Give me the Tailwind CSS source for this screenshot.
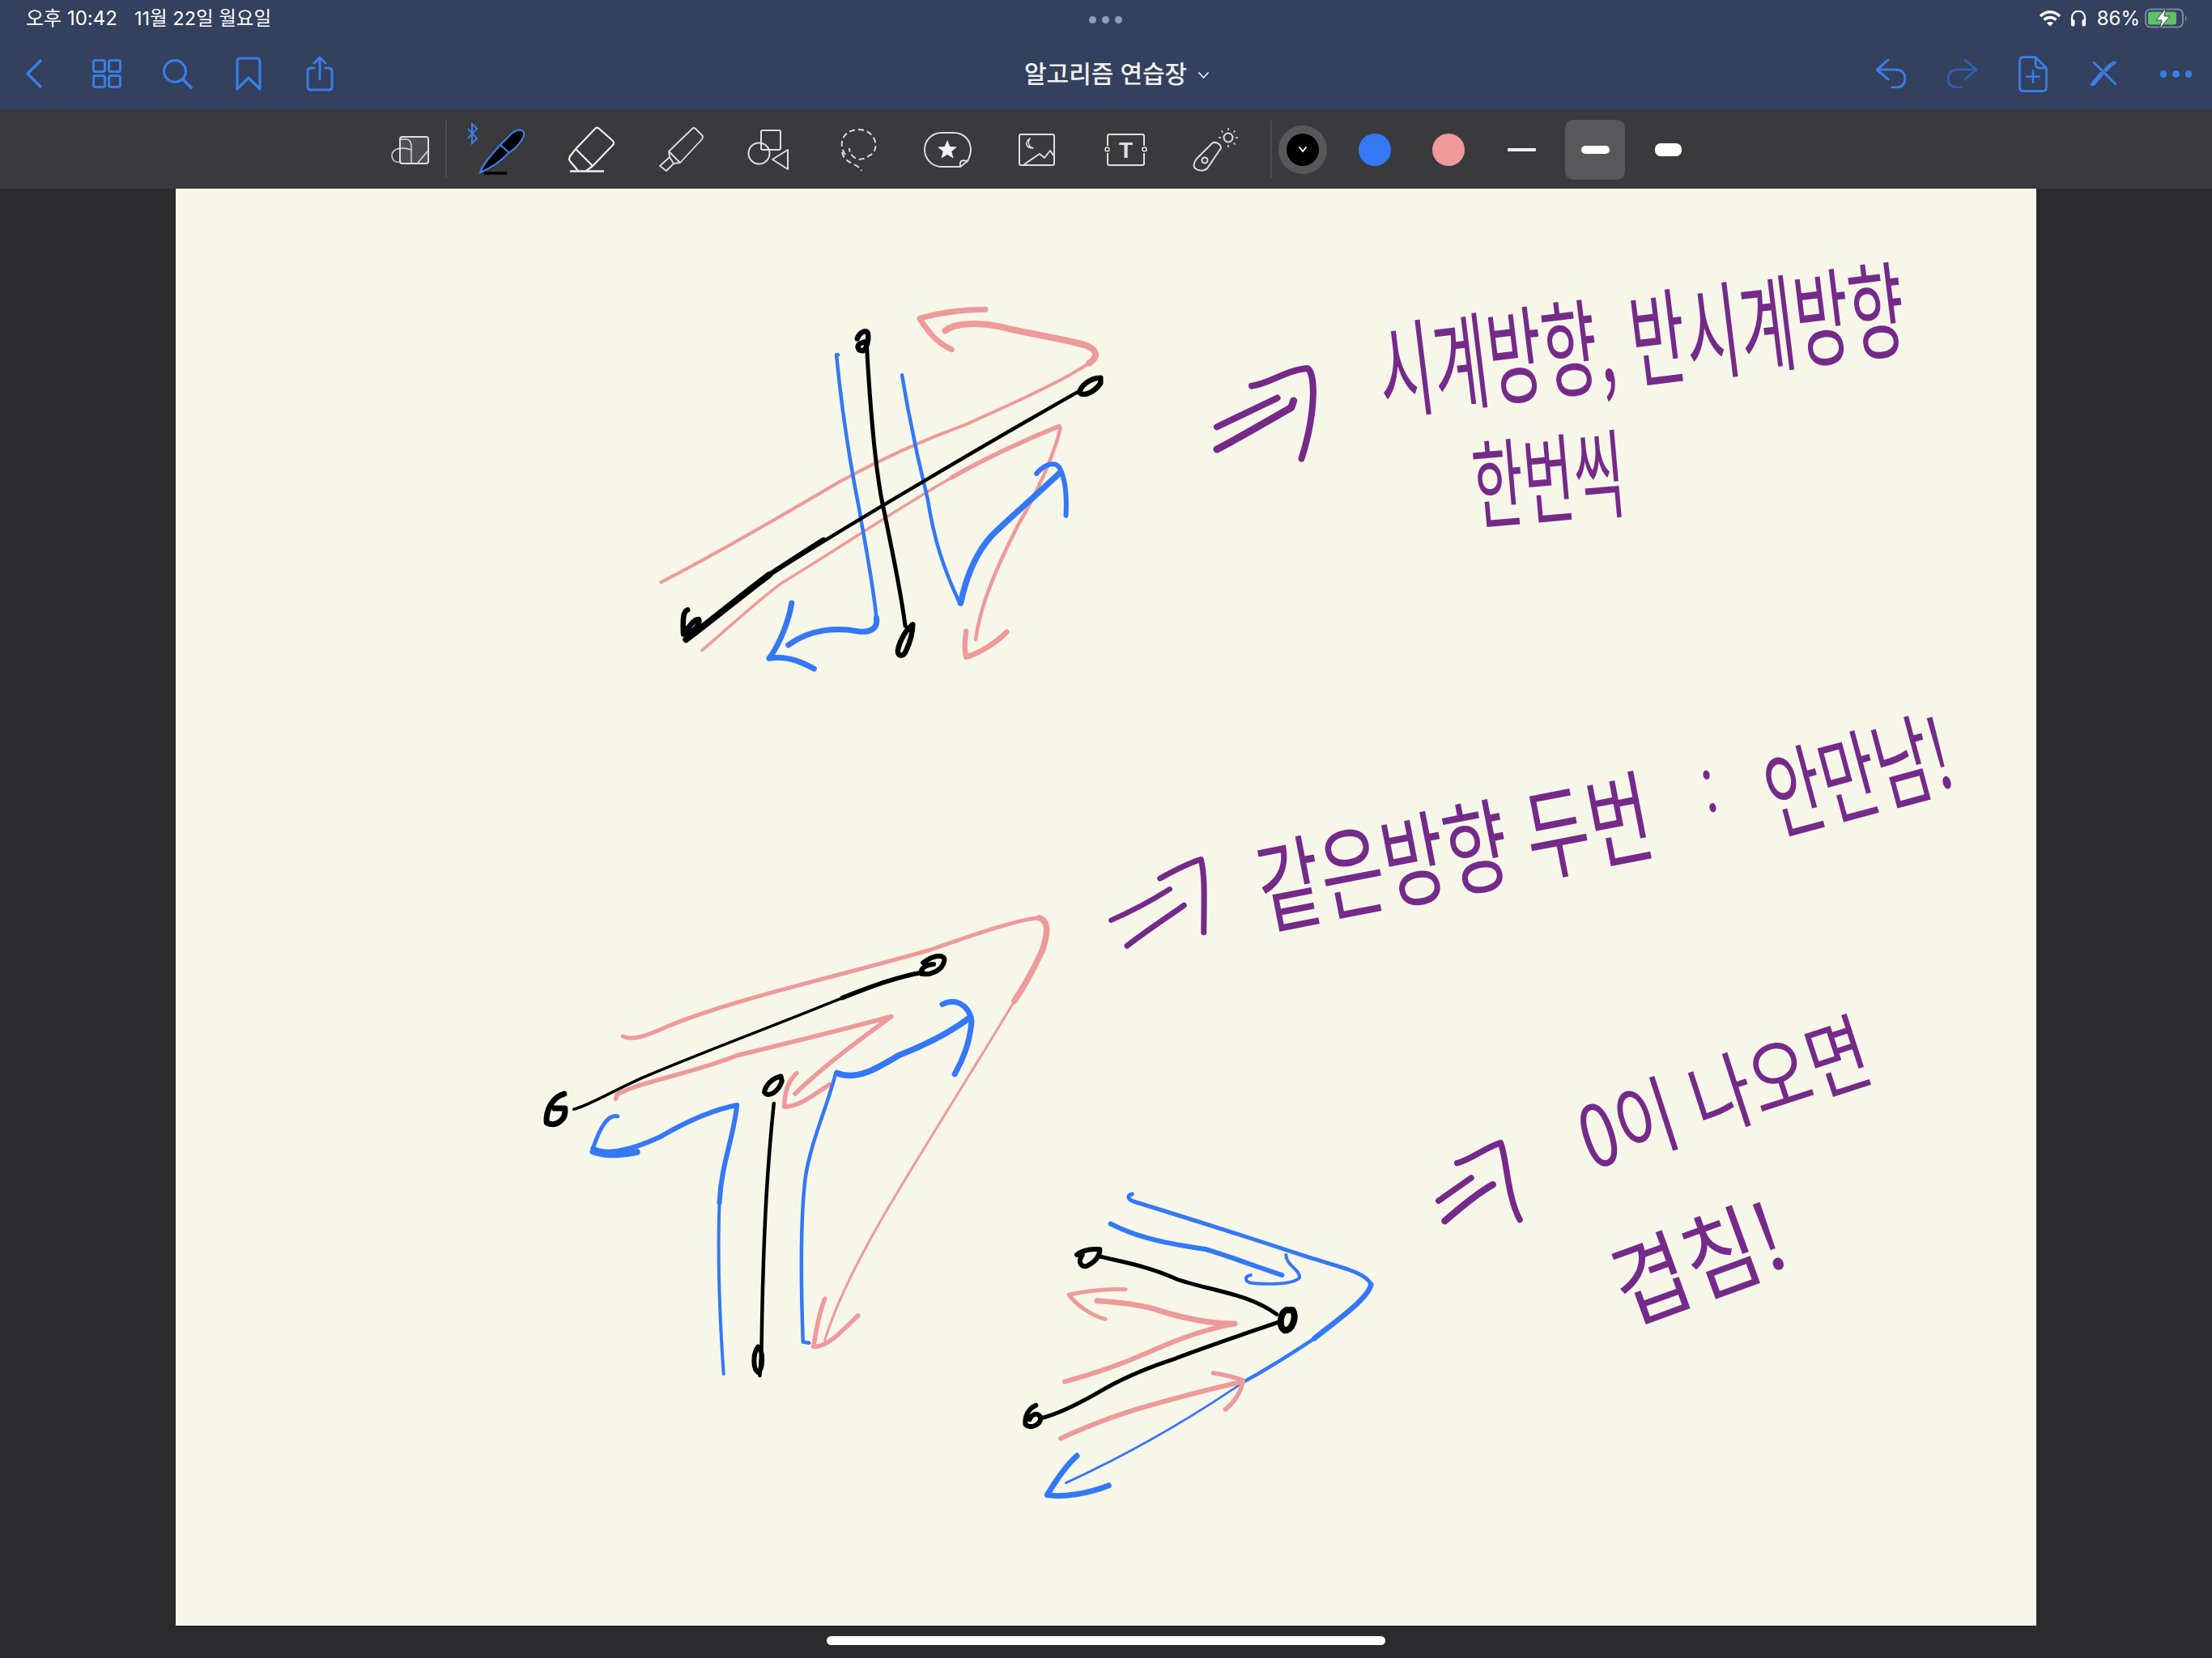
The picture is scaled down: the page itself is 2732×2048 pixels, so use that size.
<!DOCTYPE html>
<html lang="ko">
<head>
<meta charset="UTF-8">
<title>알고리즘 연습장</title>
<script src="https://cdn.jsdelivr.net/npm/@tailwindcss/browser@4"></script>
</head>
<body class="w-[2732px] h-[2048px] overflow-hidden bg-[#2b2b2d] [font-family:Inter,'Noto_Sans_CJK_KR',sans-serif]">

  <!-- top bars -->
  <header class="h-[136px] bg-[#33405e] flex flex-col">
    <div class="h-[46px] relative flex items-center pl-[32px] pr-[29px] text-white text-[24px] leading-none">
      <span class="w-[134px]">오후 10:42</span>
      <span class="text-[23.500px]">11월 22일 월요일</span>
      <div class="absolute left-[1345px] top-[20px] flex gap-[7px]">
        <i class="block w-[9px] h-[9px] rounded-full bg-[#8f9dbb]"></i>
        <i class="block w-[9px] h-[9px] rounded-full bg-[#8f9dbb]"></i>
        <i class="block w-[9px] h-[9px] rounded-full bg-[#8f9dbb]"></i>
      </div>
      <div class="ml-auto flex items-center">
        <svg class="w-[28px] h-[20px]" viewBox="0 0 28 20" fill="none" stroke="#fff" stroke-width="3.4">
          <path d="M2 7 C9 0 19 0 26 7"/><path d="M6.5 11.5 C11 7.5 17 7.5 21.5 11.5"/>
          <path d="M14 19.5 L10 15.5 C12 13.5 16 13.5 18 15.5 Z" fill="#fff" stroke="none"/>
        </svg>
        <svg class="w-[20px] h-[20px] ml-[11px]" viewBox="0 0 20 20" fill="none" stroke="#fff" stroke-width="2.2">
          <path d="M2 13 V9 C2 -2 18 -2 18 9 V13"/>
          <rect x="1" y="11" width="4.5" height="8.5" rx="2" fill="#fff" stroke="none"/>
          <rect x="14.5" y="11" width="4.5" height="8.5" rx="2" fill="#fff" stroke="none"/>
        </svg>
        <span class="ml-[13px]">86%</span>
        <svg class="w-[54px] h-[26px] ml-[6px]" viewBox="0 0 54 26" fill="none">
          <rect x="1" y="1.5" width="46" height="22" rx="6" stroke="#7d88a2" stroke-width="2"/>
          <rect x="4" y="4.5" width="35" height="16" rx="3" fill="#5dc264"/>
          <path d="M50 8 Q53 12.500 50 17 Z" fill="#7d88a2"/>
          <path d="M26 0 L14 15 H21 L18 26 L31 10 H24 Z" fill="#fff" stroke="#33405e" stroke-width="1"/>
        </svg>
      </div>
    </div>
    <nav class="flex-1 flex items-center pl-[32px] pr-[25px] text-[#3a7de6]">
      <div class="w-[1233px] flex items-center">
        <svg class="w-[20px] h-[36px]" viewBox="0 0 20 36" fill="none" stroke="currentColor" stroke-width="3.4" stroke-linecap="round" stroke-linejoin="round"><path d="M18 2 L2 18 L18 34"/></svg>
        <svg class="w-[36px] h-[36px] ml-[62px]" viewBox="0 0 36 36" fill="none" stroke="currentColor" stroke-width="3"><rect x="1.500" y="1.500" width="14" height="14" rx="2.500"/><rect x="20.500" y="1.500" width="14" height="14" rx="2.500"/><rect x="1.500" y="20.500" width="14" height="14" rx="2.500"/><rect x="20.500" y="20.500" width="14" height="14" rx="2.500"/></svg>
        <svg class="w-[37px] h-[37px] ml-[51px]" viewBox="0 0 37 37" fill="none" stroke="currentColor" stroke-width="3.2" stroke-linecap="round"><circle cx="15" cy="15" r="13.400"/><path d="M25 25 L35 35" stroke-width="3.800"/></svg>
        <svg class="w-[32px] h-[42px] ml-[53px]" viewBox="0 0 32 42" fill="none" stroke="currentColor" stroke-width="3.200" stroke-linejoin="round"><path d="M2 40 V6 Q2 2 6 2 H26 Q30 2 30 6 V40 L16 26 Z"/></svg>
        <svg class="w-[34px] h-[44px] ml-[55px]" viewBox="0 0 34 44" fill="none" stroke="currentColor" stroke-width="3" stroke-linecap="round" stroke-linejoin="round"><path d="M10 15 H6 Q2 15 2 19 V38 Q2 42 6 42 H28 Q32 42 32 38 V19 Q32 15 28 15 H24"/><path d="M17 29 V2 M10 9 L17 2 L24 9"/></svg>
      </div>
      <div class="flex items-center text-[#f0f0f0]">
        <span class="text-[30px] font-medium leading-none">알고리즘 연습장</span>
        <svg class="w-[13px] h-[8px] ml-[14px] mt-[3px]" viewBox="0 0 13 8" fill="none" stroke="currentColor" stroke-width="1.800" stroke-linecap="round" stroke-linejoin="round"><path d="M1 1 L6.500 7 L12 1"/></svg>
      </div>
      <div class="ml-auto flex items-center">
        <svg class="w-[37px] h-[36px]" viewBox="0 0 37 36" fill="none" stroke="currentColor" stroke-width="3" stroke-linecap="round" stroke-linejoin="round"><path d="M15 1 L1 13 L15 25 M1 13 H24 C32 13 36 18 36 24 C36 31 31 35 26 35 H20"/></svg>
        <svg class="w-[37px] h-[36px] ml-[51px] text-[#2f5fa8]" viewBox="0 0 37 36" fill="none" stroke="currentColor" stroke-width="3" stroke-linecap="round" stroke-linejoin="round"><path d="M22 1 L36 13 L22 25 M36 13 H13 C5 13 1 18 1 24 C1 31 6 35 11 35 H17"/></svg>
        <svg class="w-[36px] h-[45px] ml-[51px]" viewBox="0 0 36 45" fill="none" stroke="currentColor" stroke-width="2.800" stroke-linejoin="round"><path d="M6 1.500 H21 L34.500 15 V39 Q34.500 43.500 30 43.500 H6 Q1.500 43.500 1.500 39 V6 Q1.500 1.500 6 1.500 Z"/><path d="M21 1.500 V10 Q21 15 26 15 H34.500"/><path d="M18 17 V34 M9 25.500 H27" stroke-width="2.400"/></svg>
        <svg class="w-[32px] h-[30px] ml-[53px]" viewBox="0 0 32 30" fill="none" stroke="currentColor" stroke-width="2.800" stroke-linecap="round"><path d="M4 1 L31 28"/><path d="M2 29 L13 16" stroke-width="5.500"/><path d="M19 10 L24 5" stroke-width="5"/><path d="M27 3 L30 0.500" stroke-width="4.500"/></svg>
        <div class="flex gap-[7px] ml-[54px] mr-[0px]">
          <i class="block w-[8px] h-[9px] rounded-full bg-[#3a7de6]"></i>
          <i class="block w-[9px] h-[9px] rounded-full bg-[#3a7de6]"></i>
          <i class="block w-[8px] h-[9px] rounded-full bg-[#3a7de6]"></i>
        </div>
      </div>
    </nav>
  </header>

  <div class="h-[97px] bg-[#3a3a3c] flex items-center pl-[482px] text-[#dedede]">
    <!-- page tool -->
    <svg class="w-[48px] h-[40px]" viewBox="0 0 48 40" fill="none" stroke="currentColor" stroke-width="2">
      <rect x="12" y="4" width="35" height="33" rx="3" fill="#4e4e50"/>
      <path d="M34 36 L46 22" stroke-width="1.500"/>
      <path d="M12 7 H18 C25 7 26 11 26 17 V37 M26 20 C12 15 2 20 2 27 C2 34 10 38 13 33" stroke-width="1.400"/>
    </svg>
    <div class="w-[2px] h-[71px] bg-[#4e4e50] ml-[20px]"></div>
    <!-- pen -->
    <svg class="w-[76px] h-[68px] ml-[23px] overflow-visible" viewBox="0 0 76 68" fill="none">
      <path d="M24 63 H50" stroke="#000" stroke-width="3.500" stroke-linecap="round"/>
      <path d="M18 62 C22 50 34 38 43 28 L58 13 C64 8 71 9 72 13 C73 18 66 27 60 33 L53 38 C44 48 30 57 18 62 Z" fill="#000" stroke="#3a7de6" stroke-width="2.200"/>
      <path d="M43 28 L54 38" stroke="#3a7de6" stroke-width="2.200"/>
      <path d="M3 8 L14 20 L8 26 V2 L14 8 L3 20" stroke="#3a7de6" stroke-width="2"/>
    </svg>
    <!-- eraser -->
    <svg class="w-[56px] h-[55px] ml-[52px] overflow-visible" viewBox="0 0 56 55" fill="none" stroke="#f0f0f0" stroke-width="2.200" stroke-linejoin="round">
      <path d="M33 1 Q35 0 37 2 L54 17 Q56 20 54 22 L29 48 L8 27 Z"/>
      <path d="M8 27 L1 36 Q-1 40 1 42 L11 54"/><path d="M29 48 L21 54"/><path d="M1 54.500 H43" stroke-width="2.600"/>
    </svg>
    <!-- highlighter -->
    <svg class="w-[53px] h-[53px] ml-[56px] overflow-visible" viewBox="0 0 53 53" fill="none" stroke="currentColor" stroke-width="1.800" stroke-linejoin="round">
      <path d="M40 1 Q42 -1 44 1 L52 9 Q54 11 52 14 L25 43 L11 29 Z"/>
      <path d="M11 29 L12 36 L0 47 L8 53 L17 44 L25 43"/><path d="M12 36 L17 44"/>
    </svg>
    <!-- shapes -->
    <svg class="w-[52px] h-[50px] ml-[56px] overflow-visible" viewBox="0 0 52 50" fill="none" stroke="currentColor" stroke-width="2" stroke-linejoin="round">
      <rect x="16" y="1" width="24" height="24" rx="2"/>
      <ellipse cx="13.500" cy="29.500" rx="13" ry="13"/>
      <path d="M49 25 L30 37 L49 49 Z"/>
    </svg>
    <!-- lasso -->
    <svg class="w-[46px] h-[52px] ml-[62px] overflow-visible" viewBox="0 0 46 52" fill="none" stroke="currentColor" stroke-width="2" stroke-dasharray="7 4">
      <path d="M6 32 C-2 22 0 2 22 1 C44 1 50 26 36 33 C30 38 22 39 18 36 C12 32 11 28 11 24"/>
      <path d="M2 29 C5 44 22 42 26 52"/>
    </svg>
    <!-- sticker -->
    <svg class="w-[59px] h-[44px] ml-[57px]" viewBox="0 0 59 44" fill="none" stroke="currentColor" stroke-width="2">
      <path d="M22 1 H37 C49 1 58 10 58 22 C58 28 56 32 54 36 C46 34 44 36 45 43 H22 C10 43 1 33 1 22 C1 10 10 1 22 1 Z"/>
      <path d="M54 36 L45 43"/>
      <path d="M29 10 L32.300 18 L41 18.600 L34.300 24 L36.500 32.500 L29 28 L21.500 32.500 L23.700 24 L17 18.600 L25.700 18 Z" fill="#f0f0f0" stroke="none"/>
    </svg>
    <!-- image -->
    <svg class="w-[45px] h-[40px] ml-[58px]" viewBox="0 0 45 40" fill="none" stroke="currentColor" stroke-width="2" stroke-linejoin="round">
      <rect x="1" y="1" width="43" height="38" rx="2"/>
      <path d="M14 6 C8 10 8 18 18 18 C12 16 11 11 14 6 Z" stroke-width="1.500"/>
      <path d="M7 38 L26 25 L32 30 L39 21 L44 28"/>
    </svg>
    <!-- text -->
    <svg class="w-[54px] h-[40px] ml-[61px]" viewBox="0 0 54 40" fill="none" stroke="currentColor" stroke-width="2">
      <path d="M4 15 V3 Q4 1 6 1 H47 Q49 1 49 3 V15 M4 24 V37 Q4 39 6 39 H47 Q49 39 49 37 V24"/>
      <circle cx="3.500" cy="19.500" r="2.500" stroke-width="1.500"/><circle cx="49.500" cy="19.500" r="2.500" stroke-width="1.500"/>
      <text x="26.500" y="30" text-anchor="middle" font-size="28" font-weight="700" fill="currentColor" stroke="none" class="[font-family:'Liberation_Sans',sans-serif]">T</text>
    </svg>
    <!-- laser -->
    <svg class="w-[57px] h-[53px] ml-[56px] overflow-visible" viewBox="0 0 57 53" fill="none" stroke="currentColor" stroke-width="2">
      <path d="M4 38 L23 19 C27 16 34 20 34 25 L17 50 C13 54 6 53 2 50 C-1 46 1 42 4 38 Z"/>
      <circle cx="14" cy="40" r="3.500"/>
      <circle cx="43" cy="12" r="5.500"/>
      <path d="M43 0 V3 M43 21 V24 M31 12 H34 M52 12 H55 M34.500 3.500 L36.500 5.500 M49.500 18.500 L51.500 20.500 M51.500 3.500 L49.500 5.500" stroke-width="1.500"/>
    </svg>
    <div class="w-[2px] h-[71px] bg-[#4e4e50] ml-[38px]"></div>
    <!-- colours -->
    <div class="w-[60px] h-[60px] ml-[8px] rounded-full bg-[#58585a] flex items-center justify-center">
      <div class="w-[40px] h-[40px] rounded-full bg-black flex items-center justify-center">
        <svg class="w-[10px] h-[7px]" viewBox="0 0 10 7" fill="none" stroke="#fff" stroke-width="1.800" stroke-linecap="round"><path d="M1 1 L5 6 L9 1"/></svg>
      </div>
    </div>
    <div class="w-[40px] h-[40px] ml-[39px] rounded-full bg-[#3478f6]"></div>
    <div class="w-[40px] h-[40px] ml-[51px] rounded-full bg-[#ee9a9a]"></div>
    <!-- stroke widths -->
    <div class="w-[35px] h-[4px] ml-[53px] bg-[#f0f0f0] rounded-[1px]"></div>
    <div class="w-[74px] h-[74px] ml-[36px] bg-[#58585a] rounded-[10px] flex items-center justify-center">
      <div class="w-[35px] h-[10px] bg-white rounded-full"></div>
    </div>
    <div class="w-[33px] h-[16px] ml-[37px] bg-white rounded-[7px]"></div>
  </div>

  <!-- paper -->
  <main class="ml-[217px] w-[2298px] h-[1775px] bg-[#f6f6e9]">
    <svg class="w-full h-full [&_path]:[vector-effect:non-scaling-stroke] [font-family:'Noto_Sans_CJK_KR',sans-serif]" viewBox="217 233 2298 1775" fill="none" stroke-linecap="round" stroke-linejoin="round">

      <!-- first sketch -->
      <g transform="translate(780 350) scale(0.3954 0.3333)">
        <g stroke="#ee9a9a">
          <path stroke-width="7" d="M1105 97 C1040 97 960 110 900 130 C925 180 960 225 1000 245"/>
          <path stroke-width="8" d="M980 175 C1010 145 1090 145 1150 160 C1250 190 1350 205 1420 230 C1460 250 1455 275 1430 295"/>
          <path stroke-width="4" d="M1430 295 C1350 360 1200 440 1050 520 C900 585 780 650 650 735 C500 840 300 980 92 1108"/>
          <path stroke-width="3.500" d="M1335 530 C1250 570 1100 650 1000 720 C850 820 650 980 470 1110 C380 1190 290 1290 220 1360"/>
          <path stroke-width="5.500" d="M1335 530 C1250 570 1100 650 1000 720"/>
          <path stroke-width="4.500" d="M1340 535 C1320 640 1260 790 1210 890 C1150 1030 1090 1180 1075 1320"/>
          <path stroke-width="6.500" d="M1045 1290 C1040 1330 1040 1360 1045 1385 C1090 1370 1140 1330 1172 1292"/>
        </g>
        <g stroke="#3478f6">
          <path stroke-width="4.500" d="M645 265 L640 265 C655 450 680 650 710 830 C735 1000 755 1120 765 1240"/>
          <path stroke-width="7" d="M765 1240 C770 1280 745 1295 710 1290 C640 1275 560 1280 490 1340"/>
          <path stroke-width="7" d="M500 1185 C490 1260 460 1340 430 1390 C470 1380 520 1395 570 1428"/>
          <path stroke-width="4.500" d="M845 340 C870 520 900 680 925 800 C945 950 975 1060 1025 1185"/>
          <path stroke-width="7.500" d="M1028 1185 C1045 1090 1075 1000 1125 935 C1190 860 1260 790 1340 700"/>
          <path stroke-width="6" d="M1265 705 C1290 670 1320 660 1335 680 C1355 720 1360 790 1357 860"/>
        </g>
        <g stroke="#000">
          <path stroke-width="5" d="M735 240 C745 450 760 700 790 850 C815 1000 840 1130 855 1270"/>
          <path stroke-width="6.500" d="M705 205 C712 180 735 170 738 185 C742 205 735 245 722 250 C705 250 703 230 715 222 L735 215"/>
          <path stroke-width="6.500" d="M878 1265 C860 1280 838 1320 832 1360 C830 1385 850 1385 858 1360 C870 1330 878 1295 878 1265"/>
          <path stroke-width="4.500" d="M1405 395 C1100 600 700 880 430 1080"/>
          <path stroke-width="6" d="M600 950 C540 995 480 1040 430 1080"/>
          <path stroke-width="8" d="M430 1080 C340 1160 260 1240 170 1320"/>
          <path stroke-width="6.500" d="M175 1210 C160 1215 160 1250 162 1300 M175 1280 C185 1265 195 1245 210 1245 C215 1265 195 1290 170 1300"/>
          <path stroke-width="6.500" d="M1465 350 C1430 350 1400 385 1400 405 C1410 420 1445 405 1465 370 Z"/>
        </g>
      </g>

      <!-- second sketch -->
      <g transform="translate(650 1110) scale(0.4337 0.3954)">
        <g stroke="#ee9a9a">
          <path stroke-width="5" d="M275 430 C300 445 340 430 400 400 C600 310 900 240 1150 160 C1280 110 1400 65 1460 60"/>
          <path stroke-width="7.500" d="M1460 60 C1490 70 1485 110 1470 160 C1450 210 1420 270 1390 320"/>
          <path stroke-width="3" d="M1390 320 C1320 450 1250 570 1150 750 C1020 980 900 1200 850 1380"/>
          <path stroke-width="5.500" d="M255 625 L258 612 C330 570 460 550 600 490 C750 450 900 410 1040 368 C950 440 850 520 765 610"/>
          <path stroke-width="5.500" d="M770 545 C745 570 735 610 735 650 C780 650 820 610 865 580"/>
          <path stroke-width="5.500" d="M850 1250 C835 1290 825 1350 818 1400 C860 1400 900 1350 945 1302"/>
        </g>
        <g stroke="#3478f6">
          <path stroke-width="5" d="M260 680 C230 670 205 730 190 780"/>
          <path stroke-width="6" d="M190 780 C240 810 330 770 380 745 C450 700 530 660 600 645 C590 750 555 830 550 950"/>
          <path stroke-width="4" d="M550 950 C545 1100 550 1300 562 1485"/>
          <path stroke-width="8" d="M190 790 C230 805 280 800 315 792"/>
          <path stroke-width="4.500" d="M880 550 C860 640 810 760 795 870 C780 1000 782 1200 788 1385 L805 1388"/>
          <path stroke-width="7.500" d="M885 545 C940 570 1000 530 1060 490 C1130 460 1200 425 1265 370"/>
          <path stroke-width="7" d="M1185 330 C1220 310 1260 330 1268 380 C1265 450 1240 510 1220 548"/>
        </g>
        <g stroke="#000">
          <path stroke-width="3.500" d="M135 658 C170 650 230 610 330 560 C500 480 700 400 900 310"/>
          <path stroke-width="5.500" d="M900 310 C970 280 1050 245 1130 230"/>
          <path stroke-width="7" d="M108 610 C75 620 55 660 58 700 C85 715 115 690 110 655 L80 655"/>
          <path stroke-width="6" d="M1130 200 C1165 172 1195 175 1190 195 C1185 225 1150 240 1125 235 C1120 215 1145 205 1160 205"/>
          <path stroke-width="6" d="M725 555 C700 560 680 585 678 605 C690 625 720 600 728 570 Z"/>
          <path stroke-width="4.500" d="M705 640 C690 800 675 1000 670 1400 L665 1490"/>
          <path stroke-width="6" d="M660 1400 C645 1420 645 1470 660 1480 C675 1470 675 1410 660 1400"/>
        </g>
      </g>

      <!-- third sketch -->
      <g transform="translate(1240 1440) scale(0.3333 0.3333)">
        <g stroke="#3478f6">
          <path stroke-width="5" d="M475 105 C455 110 460 125 480 132 C700 200 950 280 1100 330 C1220 370 1340 390 1360 440"/>
          <path stroke-width="6.500" d="M1360 440 C1350 490 1250 560 1150 640"/>
          <path stroke-width="4.500" d="M1150 640 C1060 700 980 750 890 800"/>
          <path stroke-width="2.800" d="M890 800 C700 930 480 1060 230 1175"/>
          <path stroke-width="7" d="M270 1075 C230 1110 190 1170 160 1220 C220 1230 310 1215 388 1185"/>
          <path stroke-width="6" d="M395 215 C500 270 620 290 750 310 C850 340 950 380 1030 405"/>
          <path stroke-width="4" d="M915 405 C890 410 890 430 920 435 C990 440 1070 440 1095 415 C1100 385 1045 370 1045 330"/>
        </g>
        <g stroke="#ee9a9a">
          <path stroke-width="5" d="M450 458 C380 455 300 465 240 478 C270 515 320 555 375 568"/>
          <path stroke-width="7" d="M345 500 C400 505 500 510 570 535 C650 560 750 585 855 585"/>
          <path stroke-width="6" d="M855 585 C750 605 650 640 550 685 C450 730 340 770 225 800"/>
          <path stroke-width="6" d="M210 1010 C280 980 350 945 500 900 C620 865 750 830 885 800"/>
          <path stroke-width="5.500" d="M775 768 C820 775 860 785 885 795 C880 840 850 880 820 903"/>
        </g>
        <g stroke="#000">
          <path stroke-width="5" d="M350 335 C430 355 530 370 640 420 C750 460 900 470 1010 550"/>
          <path stroke-width="6" d="M355 310 C310 305 280 320 270 330 M290 330 C270 360 290 380 310 370 C340 355 355 335 355 310"/>
          <path stroke-width="5" d="M1015 580 C900 620 750 670 620 720 C500 760 400 810 350 840 C280 880 200 920 140 935"/>
          <path stroke-width="8" d="M1045 535 C1020 550 1020 600 1040 610 C1070 610 1085 560 1070 535 Z"/>
          <path stroke-width="6" d="M118 888 C90 900 75 930 80 960 C100 975 140 960 135 930 C120 910 100 925 95 940"/>
        </g>
      </g>

      <!-- implication arrows -->
      <g stroke="#752a8a">
        <g transform="translate(1480 300) scale(0.574 0.3333)">
          <path stroke-width="8" d="M115 530 C150 525 190 470 235 465 C255 490 250 650 222 800"/>
          <path stroke-width="8" d="M40 682 L170 575"/>
          <path stroke-width="9" d="M40 765 C90 720 160 650 200 610 L205 585"/>
        </g>
        <g transform="translate(1350 850) scale(0.7015 0.3333)">
          <path stroke-width="7" d="M118 705 C140 680 165 650 190 635 C198 700 195 800 195 905"/>
          <path stroke-width="6.500" d="M32 860 C70 825 105 785 135 745"/>
          <path stroke-width="7" d="M60 955 C90 905 130 850 160 805"/>
        </g>
        <g transform="translate(1750 1230) scale(0.3827 0.3333)">
          <path stroke-width="7.500" d="M130 620 C170 610 225 560 270 545 C290 600 290 740 332 830"/>
          <path stroke-width="7.500" d="M70 760 L175 675"/>
          <path stroke-width="8.500" d="M90 835 C130 795 190 735 245 700"/>
        </g>
      </g>

      <!-- notes -->
      <g fill="#752a8a" stroke="none" font-size="100" text-anchor="middle" dominant-baseline="central">
        <text transform="translate(2026 412) rotate(-7) scale(.74 1.3)">시계방향, 반시계방향</text>
        <text transform="translate(1912 585) rotate(-5) scale(.68 1.2)">한번씩</text>
        <text transform="translate(1795 1045) rotate(-11) scale(.85 1.25)">같은방향 두번</text>
        <text transform="translate(2111 975) rotate(-11) scale(.6 .8)">:</text>
        <text transform="translate(2293 950) rotate(-15) scale(.75 1.2)">안만남!</text>
        <text transform="translate(2127 1345) rotate(-18) scale(.82 1.05)">0이 나오면</text>
        <text transform="translate(2095 1552) rotate(-20) scale(1 1.15)">겹침!</text>
      </g>
    </svg>
  </main>

  <div class="h-[40px] flex justify-center pt-[13px]">
    <div class="w-[690px] h-[11px] rounded-full bg-white"></div>
  </div>
</body>
</html>
